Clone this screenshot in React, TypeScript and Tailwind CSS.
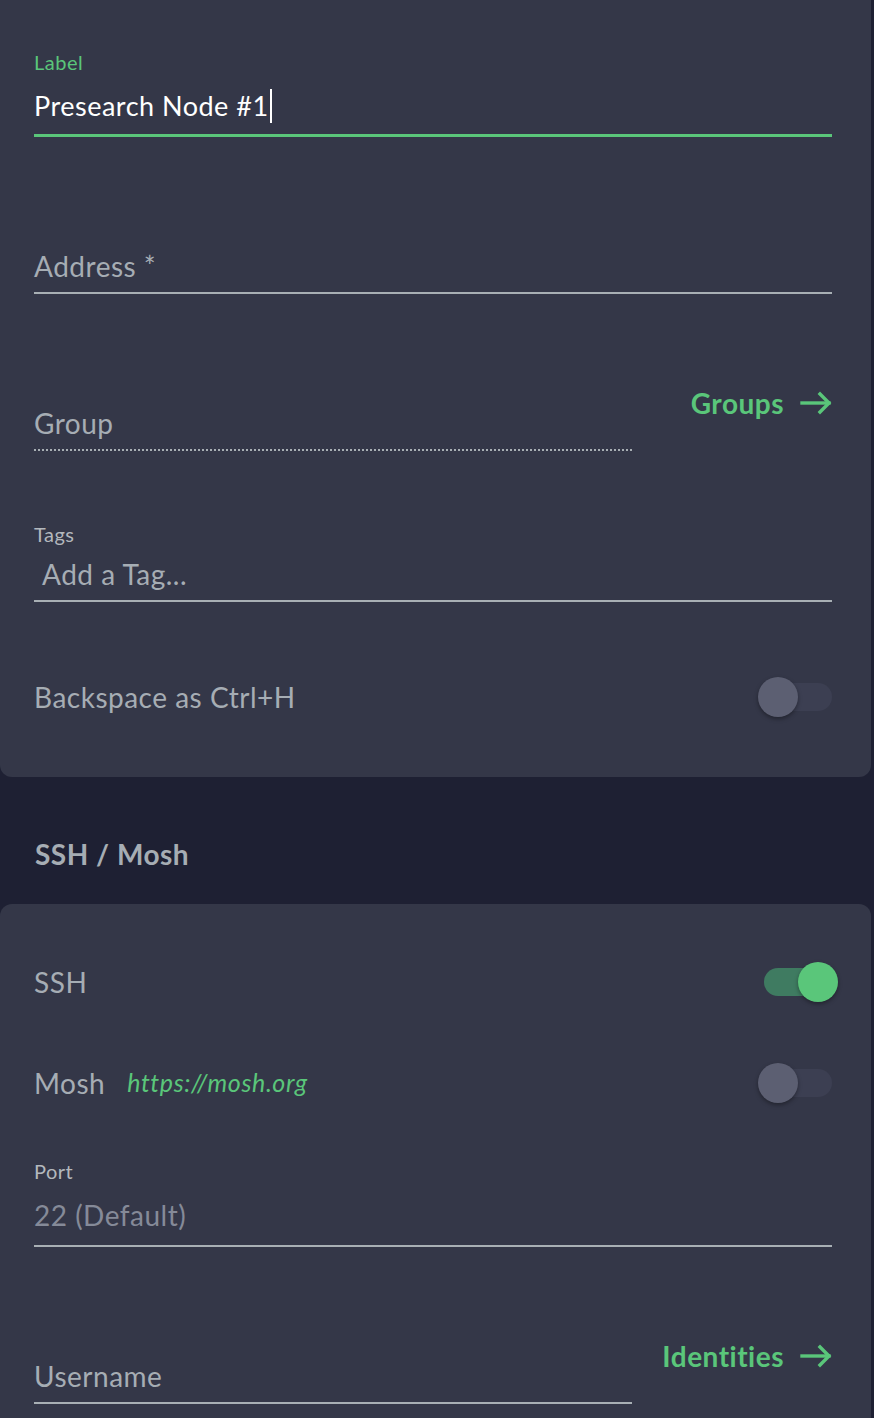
import React from 'react';

const font = { fontFamily: 'Lato, "Open Sans", sans-serif' };

function Arrow() {
  return (
    <svg width="32" height="24" viewBox="0 0 32 24" fill="none" stroke="#5ac67a" strokeWidth="3.4" strokeLinecap="square">
      <path d="M2 12h27" />
      <path d="M20 3l9 9-9 9" />
    </svg>
  );
}

function Toggle({ on }: { on?: boolean }) {
  return (
    <div className="relative w-[80px] h-[40px] shrink-0">
      <div
        className={
          'absolute left-[6px] top-[6px] w-[68px] h-[28px] rounded-full ' +
          (on ? 'bg-[#3f7b61]' : 'bg-[#3c3f52]')
        }
      />
      <div
        className={
          'absolute top-0 w-[40px] h-[40px] rounded-full shadow-[0_2px_4px_rgba(0,0,0,0.35)] ' +
          (on ? 'left-[40px] bg-[#5ac67a]' : 'left-0 bg-[#5c5f72]')
        }
      />
    </div>
  );
}

const text = 'h-[32px] leading-[32px] text-[28px] tracking-[0.5px] text-[#a6adb4]';
const small = 'text-[20px] leading-[24px] tracking-[0.5px]';

export default function App() {
  return (
    <div className="min-h-screen w-[874px] bg-[#1e2033] overflow-hidden" style={font}>
      {/* General card */}
      <div className="bg-[#343748] rounded-b-xl mr-[3px] pl-[34px] pr-[39px] pb-[60px]">
        <div className="pt-[50px] border-b-[3px] border-[#5ac67a] pb-[12px]">
          <div className={small + ' text-[#5ac67a]'}>Label</div>
          <div className="mt-[16px] flex items-center h-[32px] text-[27px] tracking-[0.5px] text-white">
            Presearch Node #1
            <span className="inline-block w-[2px] h-[34px] bg-white ml-[1px]" />
          </div>
        </div>

        <div className="mt-[113px] border-b-2 border-[#a8afb4] pb-[10px]">
          <div className={text}>Address *</div>
        </div>

        <div className="mt-[97px] flex justify-between items-start">
          <div className="w-[598px] pt-[16px]">
            <div className="border-b-2 border-dotted border-[#a8afb4] pb-[10px]">
              <div className={text}>Group</div>
            </div>
          </div>
          <div className="flex items-center gap-[16px] h-[24px]">
            <span className="text-[28px] tracking-[0.5px] font-bold text-[#5ac67a]">Groups</span>
            <Arrow />
          </div>
        </div>

        <div className="mt-[71px] border-b-2 border-[#a8afb4] pb-[10px]">
          <div className={small + ' text-[#b3b8bd]'}>Tags</div>
          <div className={'mt-[12px] pl-[8px] ' + text}>Add a Tag...</div>
        </div>

        <div className="mt-[75px] flex items-center justify-between">
          <div className={text}>Backspace as Ctrl+H</div>
          <div className="-mr-[6px]">
            <Toggle />
          </div>
        </div>
      </div>

      {/* Section header */}
      <div className="pl-[35px] pt-[61px] pb-[34px]">
        <div className="h-[32px] leading-[32px] text-[28px] tracking-[0.5px] font-bold text-[#a6adb4]">SSH / Mosh</div>
      </div>

      {/* SSH card */}
      <div className="bg-[#343748] rounded-t-xl mr-[3px] pl-[34px] pr-[39px] pt-[58px] pb-[40px]">
        <div className="flex items-center justify-between">
          <div className={text}>SSH</div>
          <div className="-mr-[6px]">
            <Toggle on />
          </div>
        </div>

        <div className="mt-[61px] flex items-center justify-between">
          <div className="flex items-center gap-[22px]">
            <span className={text}>Mosh</span>
            <span className="text-[25px] tracking-[0.6px] italic text-[#5ac67a]">https://mosh.org</span>
          </div>
          <div className="-mr-[6px]">
            <Toggle />
          </div>
        </div>

        <div className="mt-[56px] border-b-2 border-[#a8afb4] pb-[14px]">
          <div className={small + ' text-[#b3b8bd]'}>Port</div>
          <div className="mt-[16px] h-[32px] leading-[32px] text-[28px] tracking-[0.5px] text-[#858a98]">22 (Default)</div>
        </div>

        <div className="mt-[97px] flex justify-between items-start">
          <div className="w-[598px] pt-[16px]">
            <div className="border-b-2 border-[#a8afb4] pb-[10px]">
              <div className={text}>Username</div>
            </div>
          </div>
          <div className="flex items-center gap-[16px] h-[24px]">
            <span className="text-[28px] tracking-[0.5px] font-bold text-[#5ac67a]">Identities</span>
            <Arrow />
          </div>
        </div>
      </div>
    </div>
  );
}
